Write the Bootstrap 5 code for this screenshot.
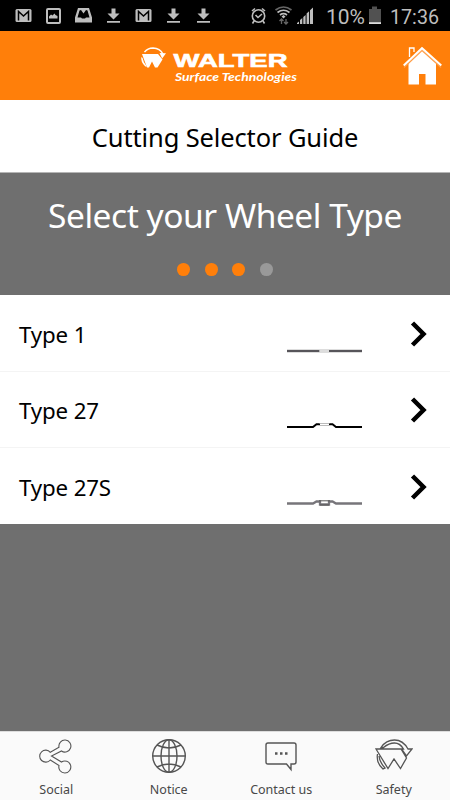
<!DOCTYPE html>
<html lang="en">
<head>
<meta charset="utf-8">
<meta name="viewport" content="width=device-width, initial-scale=1">
<title>Cutting Selector Guide</title>
<link href="https://cdn.jsdelivr.net/npm/bootstrap@5.3.0/dist/css/bootstrap.min.css" rel="stylesheet">
<style>
body{font-family:"Noto Sans","Open Sans",sans-serif;background:#6f6f6f;color:#000;height:800px;overflow:hidden}
svg{display:block;flex:none}
.status{height:31px;background:#000;color:#bebebe;font-family:Roboto,sans-serif;font-size:20px;line-height:31px}
.brand-bar{height:69px;background:#ff7f0a}
.title-bar{height:73px;border-bottom:1px solid #b5b5b5}
.title-bar h1{font-size:25.5px;line-height:1;letter-spacing:-.13px;padding-top:4px}
.step{height:122px;color:#fff}
.step h2{font-size:33.5px;line-height:46px;padding-top:19px;font-weight:400;letter-spacing:-.45px}
.dots{gap:14.7px;margin-top:25px}
.dot{width:12.8px;height:12.8px;background:#ff7f0a}
.dot.off{background:#999}
.wheel{height:76px;font-size:22.3px;border:0;border-bottom:1px solid #f4f4f4;color:#000;padding:3px 22px 0 19px;letter-spacing:-.15px}
.wheel:first-child{height:77px;padding-top:4px}
.wheel:last-child{border-bottom:0}
.disc{margin-top:2px;margin-right:47px}
.chevron{margin-bottom:2px}
.tabs{height:69px;background:#fafafa;border-top:1px solid #ddd;font-size:12.5px;color:#484848}
.tabs a{color:#484848;width:112.5px;line-height:16px;padding-top:6px}
.tabs svg{margin-bottom:8px}
</style>
</head>
<body class="d-flex flex-column">
<div class="status flex-shrink-0">
<svg width="450" height="31" viewBox="0 0 450 31" fill="#bebebe">
  <defs>
    <g id="mail"><rect width="16" height="13" rx="1.5"/><path d="M3 11.500V2.500L8 7l5-4.500v9" fill="none" stroke="#000" stroke-width="1.500"/></g>
    <g id="down"><path d="M4.500 0h4v5h4L6.500 11 .500 5h4zM0 12.500h13v1.800H0z"/></g>
  </defs>
  <use href="#mail" x="15.500" y="9"/>
  <rect x="47" y="9" width="13" height="14" rx="1" fill="none" stroke="#bebebe" stroke-width="2"/><path d="M49 18.500v-2l2-2 1.500 1 2-2 1 1.500 2 1v2.500z"/>
  <path d="M78 8h11l3 9.500v5H75v-5zm1.500 2.500-2 7H81l1 1h3l1-1h3.500l-2-7-1.500-.5-2.500 3.500-2.500-3.500z" fill-rule="evenodd"/>
  <use href="#down" x="107" y="8.500"/><use href="#mail" x="135.500" y="9"/><use href="#down" x="167" y="8.500"/><use href="#down" x="197" y="8.500"/>
  <g fill="none" stroke="#bebebe" stroke-width="1.600"><circle cx="258.500" cy="16" r="6.200"/><path d="m252 11 3-2.500M265 11l-3-2.500M254 21l-1.500 2.500M263 21l1.500 2.500M255.500 15l2.500 2.500 4-3.500"/></g>
  <g fill="none" stroke-width="1.700"><path d="M275.500 10q8-6 16 0" stroke="#666"/><path d="M277.500 12.500q6-4.500 12 0M280 15q3.500-2.600 7 0" stroke="#bebebe"/><path d="M281.500 24v-5m-2 2 2-2 2 2M286 19v5m-2-2 2 2 2-2" stroke="#666" stroke-width="1.300"/></g>
  <path d="m281.500 16.500 2-1.500 2 1.500-2 2z"/>
  <path d="M297 24v-1l2-1.500V24zM300 24v-4l2.300-2V24zM303.300 24v-7l2.300-2v9zM306.600 24V13.500l2.500-2.300V24zM310 24V10.200l3-2.700V24z"/>
  <text x="326" y="23.500" textLength="39" lengthAdjust="spacingAndGlyphs">10%</text>
  <path d="M369 9h3V6.500h5V9h4v15h-12z" fill="#515151"/><path d="M369 22.200h12V24h-12z" fill="#ddd"/>
  <text x="390" y="23.500" textLength="49" lengthAdjust="spacingAndGlyphs">17:36</text>
</svg>
</div>

<nav class="brand-bar flex-shrink-0" aria-label="Walter">
<svg width="450" height="69" viewBox="0 0 450 69" fill="#fff">
  <path d="M142 23h16l4.500 5.500-5 8h-2.500L152 30.500l-3 6H147z"/>
  <path d="M144.500 21.200q3-4 8.500-4.200 7 .4 10 6" fill="none" stroke="#fff" stroke-width="1.400"/>
  <path d="m159.500 22 6.500.3-3.800 5.200zM141.300 26q-.8 5 4 9.500h1.500q-3.500-4-4.200-8.500z"/>
  <text x="173.500" y="36.300" font-family="Liberation Sans,sans-serif" font-weight="700" font-size="19" stroke="#fff" stroke-width=".6" textLength="114" lengthAdjust="spacingAndGlyphs">WALTER</text>
  <text x="175" y="50" font-family="Lato,sans-serif" font-style="italic" font-weight="700" font-size="11.500" textLength="122" lengthAdjust="spacingAndGlyphs">Surface Technologies</text>
  <path d="M409.500 26v-9h4.500V21" fill="none" stroke="#fff" stroke-width="1.300"/>
  <path d="M422 19 408.500 31.500V53.500H419V43h6.500v10.500H436v-22z"/>
  <path d="m404 36.500 18-17 19 17" fill="none" stroke="#ff9d46" stroke-width="1.200"/>
  <path d="m403.700 34.500 18.300-17.300L441.300 34.500" fill="none" stroke="#fff" stroke-width="2"/>
</svg>
</nav>

<div class="title-bar bg-white d-flex align-items-center justify-content-center flex-shrink-0"><h1 class="m-0 fw-normal">Cutting Selector Guide</h1></div>

<section class="step text-center flex-shrink-0">
  <h2 class="m-0">Select your Wheel Type</h2>
  <div class="dots d-flex justify-content-center"><span class="dot rounded-circle"></span><span class="dot rounded-circle"></span><span class="dot rounded-circle"></span><span class="dot off rounded-circle"></span></div>
</section>

<div class="list-group list-group-flush flex-shrink-0">
  <a class="wheel list-group-item d-flex align-items-center" href="#"><span class="me-auto">Type 1</span>
    <svg class="disc" width="76" height="40" viewBox="0 0 76 40"><path d="M0 35h75" stroke="#bbb" stroke-width="3"/><path d="M0 35h32.500M42 35h33" stroke="#57555a" stroke-width="2"/><path d="M32.500 35H42" stroke="#ddd" stroke-width="2"/></svg>
    <svg class="chevron" width="18" height="26" viewBox="0 0 18 26"><path d="m2.500 2 11 11-11 11" fill="none" stroke="#000" stroke-width="4.500"/></svg></a>
  <a class="wheel list-group-item d-flex align-items-center" href="#"><span class="me-auto">Type 27</span>
    <svg class="disc" width="76" height="40" viewBox="0 0 76 40"><path d="M0 35h26l3.500-2.800H33M42 32.200h3.500l3.500 2.800h26" fill="none" stroke="#000" stroke-width="2"/><path d="M32.500 31.500h10M32.500 33.500h10" stroke="#aaa" stroke-width=".8"/></svg>
    <svg class="chevron" width="18" height="26" viewBox="0 0 18 26"><path d="m2.500 2 11 11-11 11" fill="none" stroke="#000" stroke-width="4.500"/></svg></a>
  <a class="wheel list-group-item d-flex align-items-center" href="#"><span class="me-auto">Type 27S</span>
    <svg class="disc" width="76" height="40" viewBox="0 0 76 40"><path d="M0 34.500h26l3.500-2H33v3h9v-3h3.500l3.500 2h26" fill="none" stroke="#77757a" stroke-width="2.300"/><path d="M32 31.800h11M33 36h9" stroke="#555" stroke-width="1"/></svg>
    <svg class="chevron" width="18" height="26" viewBox="0 0 18 26"><path d="m2.500 2 11 11-11 11" fill="none" stroke="#000" stroke-width="4.500"/></svg></a>
</div>

<footer class="tabs d-flex mt-auto flex-shrink-0">
  <a href="#" class="d-flex flex-column align-items-center text-decoration-none"><svg width="36" height="36" viewBox="0 0 36 36" fill="none" stroke="#555" stroke-width="1.100"><path d="M12.300 14.300 21 9.200A6 6 0 1 1 23.500 13L13.500 18l10 6A6 6 0 1 1 21 27.500L12.300 22A6 6 0 1 1 12.300 14.300Z"/></svg><span>Social</span></a>
  <a href="#" class="d-flex flex-column align-items-center text-decoration-none"><svg width="36" height="36" viewBox="0 0 36 36" fill="none" stroke="#555" stroke-width="1.400"><circle cx="18" cy="18" r="16.300"/><ellipse cx="18" cy="18" rx="8" ry="16.300"/><path d="M18 1.700v32.600M1.700 18h32.600M6 7q12 6 24 0M6 29q12-6 24 0"/></svg><span>Notice</span></a>
  <a href="#" class="d-flex flex-column align-items-center text-decoration-none"><svg width="36" height="36" viewBox="0 0 36 36" fill="none" stroke="#555" stroke-width="1.400"><path d="M5 5h26q2 0 2 2v17q0 2-2 2h-3v5.500L23.500 26H5q-2 0-2-2V7q0-2 2-2Z"/><path d="M12 15.500h2.500M17 15.500h2.500M22 15.500h2.500" stroke-width="2.500"/></svg><span>Contact us</span></a>
  <a href="#" class="d-flex flex-column align-items-center text-decoration-none"><svg width="38" height="36" viewBox="0 0 38 36" fill="none" stroke="#555" stroke-width="1.300"><path d="M1 11h25l5.500 9-6 10.500-6.500-9.500-6 9.500zM6 9.500Q11 2 19.500 2T33 11h4l-5.500 7-5-7h2Q25 5 19.500 5T8.500 9.500zM2.500 16Q1 25 8 31l2-1Q4.500 24 4 18"/></svg><span>Safety</span></a>
</footer>
<script src="https://cdn.jsdelivr.net/npm/bootstrap@5.3.0/dist/js/bootstrap.bundle.min.js"></script>
</body>
</html>
